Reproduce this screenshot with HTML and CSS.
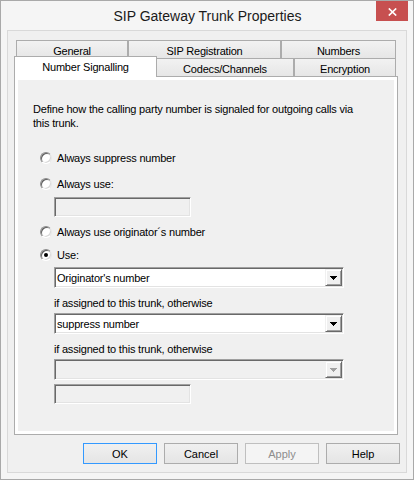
FILE: index.html
```html
<!DOCTYPE html>
<html>
<head>
<meta charset="utf-8">
<title>SIP Gateway Trunk Properties</title>
<link rel="stylesheet" href="styles.css">
</head>
<body>
<div class="window">
  <div class="titlebar">
    <div></div>
    <div class="title">SIP Gateway Trunk Properties</div>
    <div class="close"><svg width="9" height="8" viewBox="0 0 9 8"><path d="M0.8 0.5L8.2 7.5M8.2 0.5L0.8 7.5" stroke="#fff" stroke-width="1.7"/></svg></div>
  </div>
  <div class="client">
    <div class="tabs">
      <div class="tabrow back">
        <div class="tab w-general">General</div>
        <div class="tab w-sip">SIP Registration</div>
        <div class="tab w-numbers">Numbers</div>
      </div>
      <div class="tabrow front">
        <div class="tab w-ns selected">Number Signalling</div>
        <div class="tab w-codecs">Codecs/Channels</div>
        <div class="tab w-enc">Encryption</div>
      </div>
    </div>
    <div class="panel">
      <div class="page">
        <p class="desc">Define how the calling party number is signaled for outgoing calls via<br>this trunk.</p>
        <div class="radio r1"><span class="rb"></span><span>Always suppress number</span></div>
        <div class="radio r2"><span class="rb"></span><span>Always use:</span></div>
        <div class="textbox t1"></div>
        <div class="radio r3"><span class="rb"></span><span>Always use originator´s number</span></div>
        <div class="radio r4"><span class="rb checked"></span><span>Use:</span></div>
        <div class="combo c1"><span class="ctext">Originator's number</span><span class="cbtn"><svg width="7" height="4" viewBox="0 0 7 4" shape-rendering="crispEdges"><path d="M0 0h7v1H0zM1 1h5v1H1zM2 2h3v1H2zM3 3h1v1H3z" fill="#000"/></svg></span></div>
        <div class="label l1">if assigned to this trunk, otherwise</div>
        <div class="combo c2"><span class="ctext">suppress number</span><span class="cbtn"><svg width="7" height="4" viewBox="0 0 7 4" shape-rendering="crispEdges"><path d="M0 0h7v1H0zM1 1h5v1H1zM2 2h3v1H2zM3 3h1v1H3z" fill="#000"/></svg></span></div>
        <div class="label l2">if assigned to this trunk, otherwise</div>
        <div class="combo c3 disabled"><span class="ctext"></span><span class="cbtn"><svg width="7" height="4" viewBox="0 0 7 4" shape-rendering="crispEdges"><path d="M0 0h7v1H0zM1 1h5v1H1zM2 2h3v1H2zM3 3h1v1H3z" fill="#a0a0a0"/></svg></span></div>
        <div class="textbox t2"></div>
      </div>
    </div>
    <div class="buttons">
      <div class="btn default">OK</div>
      <div class="btn">Cancel</div>
      <div class="btn disabled">Apply</div>
      <div class="btn">Help</div>
    </div>
  </div>
</div>
</body>
</html>
```
FILE: styles.css
```css
* { box-sizing: border-box; }
html, body { margin: 0; padding: 0; }
body {
  width: 414px; height: 480px; overflow: hidden; background: #fff;
  font-family: "Liberation Sans", Arial, sans-serif; color: #000;
}
.window {
  width: 414px; height: 480px;
  border: 1px solid #a9a9a9;
  background: #f5f5f5;
  padding: 0 6px 6px;
  display: flex; flex-direction: column;
}
.titlebar {
  height: 29px; flex: none;
  display: grid; grid-template-columns: 1fr auto 1fr;
  margin-right: -1px;
}
.title {
  align-self: center; font-size: 14px; color: #1a1a1a;
  white-space: nowrap; padding-top: 1px;
}
.close {
  justify-self: end; align-self: start;
  width: 32px; height: 20px; background: #c75050;
  display: flex; align-items: center; justify-content: center;
  padding-top: 2px;
}
.client {
  flex: 1;
  border: 1px solid #d9d9d9;
  background: #f0f0f0;
  padding: 9px 0 8px;
  display: flex; flex-direction: column;
}
.tabs { margin-left: 8px; width: 380px; font-size: 11px; letter-spacing: -0.2px; flex: none; }
.tabrow { display: flex; height: 18px; }
.tab {
  height: 18px;
  border: 1px solid #acacac; border-bottom: none;
  background: linear-gradient(#f2f2f2, #e6e6e6);
  display: flex; align-items: center; justify-content: center;
  padding-top: 2px; white-space: nowrap;
}
.w-general { width: 112px; }
.w-sip { width: 153px; }
.w-numbers { width: 115px; }
.w-ns { width: 140px; }
.w-codecs { width: 138px; }
.w-enc { width: 102px; }
.tab.selected {
  position: relative; z-index: 2;
  width: 143px; height: 21px;
  margin: -2px -1px -1px -2px;
  background: #fff;
  padding-top: 0;
}
.panel {
  flex: none;
  margin: 0 8px 0 6px;
  height: 359px;
  border: 1px solid #acacac;
  background: #fff;
  padding: 3px;
}
.page {
  height: 100%;
  background: #f0f0f0;
  padding-top: 22px;
  font-size: 11px; letter-spacing: -0.2px;
  display: flex; flex-direction: column; align-items: flex-start;
}
.desc { margin: 0 0 0 15px; line-height: 14px; }
.radio { display: flex; align-items: center; gap: 5px; height: 16px; margin-left: 22px; white-space: nowrap; }
.r1 { margin-top: 20px; }
.r2 { margin-top: 10px; }
.r3, .r4 { margin-top: 7px; }
.rb {
  position: relative;
  width: 12px; height: 12px; border-radius: 50%;
  background: #fff;
  border: 1px solid; border-color: #8c8c8c #e6e6e6 #ffffff #8c8c8c;
  box-shadow: inset 1px 1px 0 #5e5e5e, inset -1px -1px 0 #d8d8d8;
}
.rb.checked::after {
  content: ""; position: absolute; left: 3px; top: 3px;
  width: 4px; height: 4px; border-radius: 50%; background: #000;
}
.textbox, .combo {
  margin-left: 36px;
  border: 1px solid; border-color: #a0a0a0 #ffffff #ffffff #a0a0a0;
  box-shadow: inset 1px 1px 0 #696969, inset -1px -1px 0 #e3e3e3;
}
.textbox { width: 137px; height: 20px; background: #f0f0f0; }
.t1 { margin-top: 5px; }
.t2 { margin-top: 4px; }
.combo {
  width: 290px; height: 21px; background: #fff;
  padding: 1px; display: flex; align-items: center;
}
.combo.disabled { background: #f0f0f0; }
.c1 { margin-top: 4px; }
.c2, .c3 { margin-top: 3px; }
.ctext { flex: 1; padding-left: 1px; white-space: nowrap; }
.cbtn {
  width: 17px; height: 17px; flex: none;
  background: #f0f0f0;
  border: 1px solid; border-color: #f0f0f0 #696969 #696969 #f0f0f0;
  box-shadow: inset 1px 1px 0 #fff, inset -1px -1px 0 #a0a0a0;
  display: flex; align-items: center; justify-content: center;
}
.label { margin-left: 36px; line-height: 14px; margin-top: 8px; white-space: nowrap; }
.buttons {
  flex: none; margin-top: 8px;
  display: flex; justify-content: flex-end; gap: 7px; padding-right: 6px;
}
.btn {
  width: 74px; height: 21px;
  border: 1px solid #acacac;
  background: linear-gradient(#f0f0f0, #e5e5e5);
  font-size: 11px;
  display: flex; align-items: center; justify-content: center;
}
.btn.default { border-color: #3399ff; }
.btn.disabled { border-color: #bfbfbf; background: #f4f4f4; color: #8d8d8d; }
```
